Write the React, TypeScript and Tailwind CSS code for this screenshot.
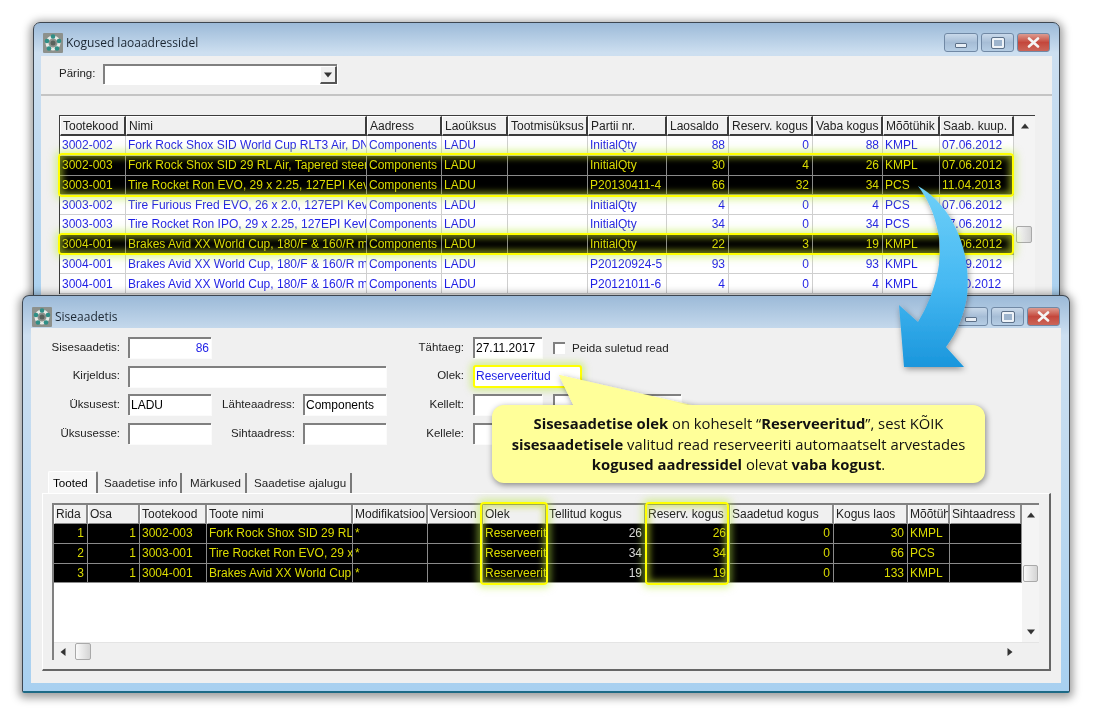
import type { ReactNode } from "react";

const headCell =
  "flex items-center pl-[2px] pr-[1px] bg-[#f0f0f0] border-t border-l border-t-white border-l-white border-r-2 border-b-2 border-r-[#3c3c3c] border-b-[#3c3c3c] whitespace-nowrap overflow-hidden text-[#222]";
const headCellLight =
  "flex items-center pl-[1px] bg-[#f0f0f0] border-r-2 border-r-[#8a8a8a] border-b border-b-[#8a8a8a] border-l border-l-white whitespace-nowrap overflow-hidden text-[#222]";

const stockCols = "grid-cols-[66px_241px_75px_66px_80px_79px_62px_84px_70px_57px_74px]";
const lineCols = "grid-cols-[34px_52px_67px_146px_75px_55px_64px_99px_84px_104px_74px_42px_72px]";

const stockHead = ["Tootekood", "Nimi", "Aadress", "Laoüksus", "Tootmisüksus", "Partii nr.", "Laosaldo", "Reserv. kogus", "Vaba kogus", "Mõõtühik", "Saab. kuup."];
const stockRight = [6, 7, 8];
const stockRows = [
  { hl: false, c: ["3002-002", "Fork Rock Shox SID World Cup RLT3 Air, DN", "Components", "LADU", "", "InitialQty", "88", "0", "88", "KMPL", "07.06.2012"] },
  { hl: true, c: ["3002-003", "Fork Rock Shox SID 29 RL Air, Tapered steer", "Components", "LADU", "", "InitialQty", "30", "4", "26", "KMPL", "07.06.2012"] },
  { hl: true, c: ["3003-001", "Tire Rocket Ron EVO, 29 x 2.25, 127EPI Kev", "Components", "LADU", "", "P20130411-4", "66", "32", "34", "PCS", "11.04.2013"] },
  { hl: false, c: ["3003-002", "Tire Furious Fred EVO, 26 x 2.0, 127EPI Kevl", "Components", "LADU", "", "InitialQty", "4", "0", "4", "PCS", "07.06.2012"] },
  { hl: false, c: ["3003-003", "Tire Rocket Ron IPO, 29 x 2.25, 127EPI Kevl", "Components", "LADU", "", "InitialQty", "34", "0", "34", "PCS", "07.06.2012"] },
  { hl: true, c: ["3004-001", "Brakes Avid XX World Cup, 180/F & 160/R m", "Components", "LADU", "", "InitialQty", "22", "3", "19", "KMPL", "07.06.2012"] },
  { hl: false, c: ["3004-001", "Brakes Avid XX World Cup, 180/F & 160/R m", "Components", "LADU", "", "P20120924-5", "93", "0", "93", "KMPL", "24.09.2012"] },
  { hl: false, c: ["3004-001", "Brakes Avid XX World Cup, 180/F & 160/R m", "Components", "LADU", "", "P20121011-6", "4", "0", "4", "KMPL", "11.10.2012"] },
];

const lineHead = ["Rida", "Osa", "Tootekood", "Toote nimi", "Modifikatsioo", "Versioon", "Olek", "Tellitud kogus", "Reserv. kogus", "Saadetud kogus", "Kogus laos", "Mõõtüh", "Sihtaadress"];
const lineRight = [0, 1, 7, 8, 9, 10];
const lineRows = [
  ["1", "1", "3002-003", "Fork Rock Shox SID 29 RL", "*", "", "Reserveerit", "26", "26", "0", "30", "KMPL", ""],
  ["2", "1", "3003-001", "Tire Rocket Ron EVO, 29 x", "*", "", "Reserveerit", "34", "34", "0", "66", "PCS", ""],
  ["3", "1", "3004-001", "Brakes Avid XX World Cup,", "*", "", "Reserveerit", "19", "19", "0", "133", "KMPL", ""],
];

const glowBox =
  "absolute rounded-[4px] border-[2.5px] border-[#ffff00] pointer-events-none";

function AppIcon() {
  return (
    <svg width="20" height="20" viewBox="0 0 20 20" className="shrink-0">
      <rect width="20" height="20" rx="1" fill="#8d918c" />
      <circle cx="10" cy="10" r="6" fill="none" stroke="#e8ebe6" strokeWidth="3" />
      <circle cx="10" cy="3.5" r="2.3" fill="#2f8f86" />
      <circle cx="16" cy="8" r="2.3" fill="#2f8f86" />
      <circle cx="14" cy="15.5" r="2.3" fill="#2f8f86" />
      <circle cx="6" cy="15.5" r="2.3" fill="#2f8f86" />
      <circle cx="4" cy="8" r="2.3" fill="#2f8f86" />
      <circle cx="10" cy="10" r="2.5" fill="#5a625c" />
    </svg>
  );
}

function WindowButtons() {
  const base = "flex items-center justify-center h-[19px] rounded-[3px] border border-[#7189a5]";
  const blue = "bg-linear-to-b from-[#c9d9ea] via-[#a6bdd6] to-[#b5cde4]";
  return (
    <div className="flex gap-[3px]">
      <div className={`${base} ${blue} w-[34px]`}>
        <div className="mt-[6px] w-[12px] h-[5px] rounded-[1px] bg-[#e8eef5] border border-[#5d7189]" />
      </div>
      <div className={`${base} ${blue} w-[33px]`}>
        <div className="w-[12px] h-[10px] rounded-[1px] bg-[#9db4cd] border-2 border-[#eef3f8] outline outline-[#5d7189]" />
      </div>
      <div className={`${base} w-[33px] bg-linear-to-b from-[#dc9a90] via-[#c4473c] to-[#cb6558] border-[#7d3a36]`}>
        <svg width="13" height="11" viewBox="0 0 13 11">
          <path d="M2 1.5 L11 9.5 M11 1.5 L2 9.5" stroke="#f4f4f4" strokeWidth="2.6" strokeLinecap="round" />
        </svg>
      </div>
    </div>
  );
}

function TitleBar({ title, className }: { title: string; className: string }) {
  return (
    <div className={`flex items-start justify-between pl-[9px] pr-[9px] ${className}`}>
      <div className="flex items-center gap-[3px]">
        <AppIcon />
        <span className="font-['Open_Sans',sans-serif] text-[12px] text-[#1c2733]">{title}</span>
      </div>
      <WindowButtons />
    </div>
  );
}

function Sunken({ className = "", children }: { className?: string; children?: ReactNode }) {
  return (
    <div className={`flex items-center h-[21px] pl-[1px] pr-[2px] pb-[2px] bg-white border-2 border-r-0 border-b-0 border-t-[#808080] border-l-[#808080] shadow-[1px_1px_0_#fbfbfb] ${className}`}>
      {children}
    </div>
  );
}

function Label({ className, children }: { className: string; children: ReactNode }) {
  return <div className={`text-right text-[11.5px] text-[#222] shrink-0 ${className}`}>{children}</div>;
}

function Arrow({ dir }: { dir: "up" | "down" | "left" | "right" }) {
  const points = {
    up: "0,6.5 4,1.5 8,6.5",
    down: "0,1.5 8,1.5 4,6.5",
    left: "6.5,0 6.5,8 1.5,4",
    right: "1.5,0 6.5,4 1.5,8",
  }[dir];
  return (
    <svg width="8" height="8" viewBox="0 0 8 8">
      <polygon points={points} fill="#333" />
    </svg>
  );
}

const thumb = "rounded-[2px] border border-[#a9a9a9] bg-linear-to-r from-[#fafafa] to-[#d4d4d4]";
const glowOuter = "shadow-[0_0_7px_3px_rgba(190,235,70,0.5),inset_0_0_6px_3px_rgba(190,215,40,0.6)]";

function StockTable() {
  return (
    <div className="relative ml-[18px] mt-[19px] w-[976px] border-l border-t border-[#3c3c3c]">
      <div className="flex">
        <div className="w-[954px]">
          <div className={`grid ${stockCols} h-[20px]`}>
            {stockHead.map((h) => (
              <div key={h} className={headCell}>{h}</div>
            ))}
          </div>
          {stockRows.map((row, i) => (
            <div key={i} className={`grid ${stockCols} h-[19.75px] ${row.hl ? "bg-black text-[#dcdc00]" : "bg-white text-[#1f1fe6]"}`}>
              {row.c.map((v, j) => (
                <div
                  key={j}
                  className={`flex items-center pl-[2px] pr-[3px] border-r border-b whitespace-nowrap overflow-hidden ${row.hl ? "border-[#8a8a8a]" : "border-[#cfcfcf]"} ${stockRight.includes(j) ? "justify-end" : ""}`}
                >
                  {v}
                </div>
              ))}
            </div>
          ))}
        </div>
        <div className="relative w-[21px] bg-[#f4f4f4] flex flex-col items-center pt-[6px]">
          <Arrow dir="up" />
          <div className={`absolute left-[2px] top-[110px] w-[16px] h-[17px] ${thumb}`} />
        </div>
      </div>
      <div className={`${glowBox} ${glowOuter} left-[-2px] top-[37px] w-[956px] h-[44px]`} />
      <div className={`${glowBox} ${glowOuter} left-[-2px] top-[117px] w-[956px] h-[22px]`} />
    </div>
  );
}

function LinesTable() {
  return (
    <div className="relative ml-[9px] mt-[9px] w-[987px] h-[157px] border-l-2 border-t-2 border-l-[#808080] border-t-[#808080]">
      <div className="flex h-[137px]">
        <div className="w-[968px] bg-white">
          <div className={`grid ${lineCols} h-[19px]`}>
            {lineHead.map((h) => (
              <div key={h} className={headCellLight}>{h}</div>
            ))}
          </div>
          {lineRows.map((row, i) => (
            <div key={i} className={`grid ${lineCols} h-[19.75px] bg-black text-[#dcdc00]`}>
              {row.map((v, j) => (
                <div
                  key={j}
                  className={`flex items-center pl-[2px] pr-[3px] border-r border-b border-[#8a8a8a] whitespace-nowrap overflow-hidden ${lineRight.includes(j) ? "justify-end" : ""} ${j === 7 ? "text-[#d8d8d8]" : ""}`}
                >
                  {v}
                </div>
              ))}
            </div>
          ))}
        </div>
        <div className="relative flex-1 bg-[#f4f4f4] flex flex-col items-center justify-between py-[6px]">
          <Arrow dir="up" />
          <Arrow dir="down" />
          <div className={`absolute left-[1px] top-[60px] w-[15px] h-[17px] ${thumb}`} />
        </div>
      </div>
      <div className="relative flex items-center justify-between h-[18px] px-[5px] pr-[25px] bg-[#f0f0f0] border-t border-[#e4e4e4]">
        <Arrow dir="left" />
        <Arrow dir="right" />
        <div className={`absolute left-[21px] top-[0px] w-[16px] h-[17px] ${thumb}`} />
      </div>
      <div className={`${glowBox} ${glowOuter} left-[426px] top-[-3px] w-[68px] h-[83px]`} />
      <div className={`${glowBox} ${glowOuter} left-[591px] top-[-3px] w-[84px] h-[83px]`} />
    </div>
  );
}

const windowFrame =
  "absolute border border-[#3d4650] rounded-t-[7px] rounded-b-[2px] bg-linear-to-b from-[#9cbad8] via-[#cddff0] via-[10%] to-[#a8d0f0] shadow-[0_2px_9px_3px_rgba(0,0,0,0.38)]";

export default function App() {
  return (
    <div className="relative w-[1093px] h-[715px] overflow-hidden bg-white font-['Liberation_Sans',sans-serif] text-[12px] leading-none blur-[0.45px]">
      {/* Kogused laoaadressidel */}
      <div className={`${windowFrame} left-[33px] top-[22px] w-[1027px] h-[300px]`}>
        <TitleBar title="Kogused laoaadressidel" className="h-[33px] pt-[10px]" />
        <div className="mx-[7px] h-[265px] bg-[#f0f0f0]">
          <div className="flex items-center h-[40px] pl-[18px] pb-[2px] border-b-2 border-[#c4c4c4]">
            <span className="w-[44px] text-[11.5px] text-[#222]">Päring:</span>
            <div className="flex justify-between items-stretch w-[234px] h-[20px] bg-white border-2 border-r-0 border-b-0 border-[#808080] shadow-[1px_1px_0_#fff]">
              <span />
              <div className="flex items-center justify-center w-[17px] bg-[#f0f0f0] border-t border-l border-t-white border-l-white border-r-2 border-b-2 border-r-[#555] border-b-[#555]">
                <Arrow dir="down" />
              </div>
            </div>
          </div>
          <StockTable />
        </div>
      </div>

      {/* Siseaadetis */}
      <div className={`${windowFrame} left-[22px] top-[295px] w-[1048px] h-[398px] border-b-2 border-b-[#1d6a86]`}>
        <TitleBar title="Siseaadetis" className="h-[32px] pt-[11px]" />
        <div className="mx-[8px] h-[355px] bg-[#f0f0f0] pt-[9px]">
          <div className="flex">
            <div className="flex flex-col gap-[7.7px] w-[355px]">
              <div className="flex items-center gap-[8px]">
                <Label className="w-[89px]">Sisesaadetis:</Label>
                <Sunken className="w-[83px] justify-end text-[#1f1fe6]">86</Sunken>
              </div>
              <div className="flex items-center gap-[8px]">
                <Label className="w-[89px]">Kirjeldus:</Label>
                <Sunken className="w-[258px]" />
              </div>
              <div className="flex items-center gap-[8px]">
                <Label className="w-[89px]">Üksusest:</Label>
                <Sunken className="w-[83px]">LADU</Sunken>
                <Label className="w-[76px]">Lähteaadress:</Label>
                <Sunken className="w-[83px]">Components</Sunken>
              </div>
              <div className="flex items-center gap-[8px]">
                <Label className="w-[89px]">Üksusesse:</Label>
                <Sunken className="w-[83px]" />
                <Label className="w-[76px]">Sihtaadress:</Label>
                <Sunken className="w-[83px]" />
              </div>
            </div>
            <div className="flex flex-col gap-[7.7px]">
              <div className="flex items-center">
                <Label className="w-[78px] mr-[9px]">Tähtaeg:</Label>
                <Sunken className="w-[69px]">27.11.2017</Sunken>
                <div className="ml-[11px] mr-[7px] w-[12px] h-[12px] bg-white border-2 border-r-0 border-b-0 border-[#808080]" />
                <span className="text-[11.6px] text-[#222]">Peida suletud read</span>
              </div>
              <div className="flex items-center h-[21px]">
                <Label className="w-[78px] mr-[9px]">Olek:</Label>
                <div className="flex items-center w-[109px] h-[23px] pl-[1px] bg-white text-[#1f1fe6] rounded-[3px] border-[2.5px] border-[#ffff00] shadow-[0_0_6px_3px_rgba(190,235,70,0.5)]">
                  Reserveeritud
                </div>
              </div>
              <div className="flex items-center">
                <Label className="w-[78px] mr-[9px]">Kellelt:</Label>
                <Sunken className="w-[69px]" />
                <Sunken className="w-[128px] ml-[11px]" />
              </div>
              <div className="flex items-center">
                <Label className="w-[78px] mr-[9px]">Kellele:</Label>
                <Sunken className="w-[69px]" />
              </div>
            </div>
          </div>

          <div className="flex items-end ml-[17px] mt-[27px] h-[22px] text-[11.6px] whitespace-nowrap">
            <div className="h-[22px] w-[50px] pl-[4px] pt-[5px] bg-[#f7f7f7] border-t border-l border-white border-r-2 border-r-[#7a7a7a] rounded-t-[2px]">
              Tooted
            </div>
            <div className="flex items-center h-[20px] w-[84px] pl-[6px] border-r-2 border-[#7a7a7a] text-[#222]">Saadetise info</div>
            <div className="flex items-center h-[20px] w-[65px] pl-[8px] border-r-2 border-[#7a7a7a] text-[#222]">Märkused</div>
            <div className="flex items-center h-[20px] w-[105px] pl-[7px] border-r-2 border-[#7a7a7a] text-[#222]">Saadetise ajalugu</div>
          </div>
          <div className="ml-[11px] w-[1009px] h-[178px] border-t border-l border-t-white border-l-white border-r-2 border-b-2 border-r-[#666] border-b-[#666]">
            <LinesTable />
          </div>
        </div>
      </div>

      {/* Selgitus */}
      <svg className="absolute left-0 top-0 pointer-events-none" width="1093" height="715" viewBox="0 0 1093 715">
        <defs>
          <linearGradient id="arrowFill" x1="0" y1="0" x2="0" y2="1">
            <stop offset="0" stopColor="#6fd0f8" />
            <stop offset="0.55" stopColor="#45b8f2" />
            <stop offset="1" stopColor="#1a96dc" />
          </linearGradient>
          <filter id="softShadow" x="-20%" y="-20%" width="140%" height="140%">
            <feDropShadow dx="1" dy="2" stdDeviation="3" floodColor="#000" floodOpacity="0.4" />
          </filter>
        </defs>
        <path
          d="M918 186 C952 205 972 250 967 296 C964 315 957 332 946 347 L964 367 L904 367 L899 305 L918 322 C932 300 945 262 938 232 C934 212 927 198 918 186 Z"
          fill="url(#arrowFill)"
          filter="url(#softShadow)"
        />
        <polygon points="559,375 574,406 696,406" fill="#ffff99" filter="url(#softShadow)" />
      </svg>
      <div className="absolute left-[492px] top-[405px] w-[493px] h-[78px] rounded-[12px] bg-[#ffff99] shadow-[1px_2px_6px_rgba(0,0,0,0.45)] flex flex-col justify-center font-['Open_Sans',sans-serif] text-[14.8px] leading-[20.5px] text-center text-[#111] whitespace-nowrap">
        <p><b>Sisesaadetise olek</b> on koheselt “<b>Reserveeritud</b>”, sest KÕIK</p>
        <p><b>sisesaadetisele</b> valitud read reserveeriti automaatselt arvestades</p>
        <p><b>kogused aadressidel</b> olevat <b>vaba kogust</b>.</p>
      </div>
      <svg className="absolute left-[550px] top-[370px] pointer-events-none" width="160" height="40" viewBox="0 0 160 40">
        <polygon points="9,5 24,37 146,37" fill="#ffff99" />
      </svg>
    </div>
  );
}
